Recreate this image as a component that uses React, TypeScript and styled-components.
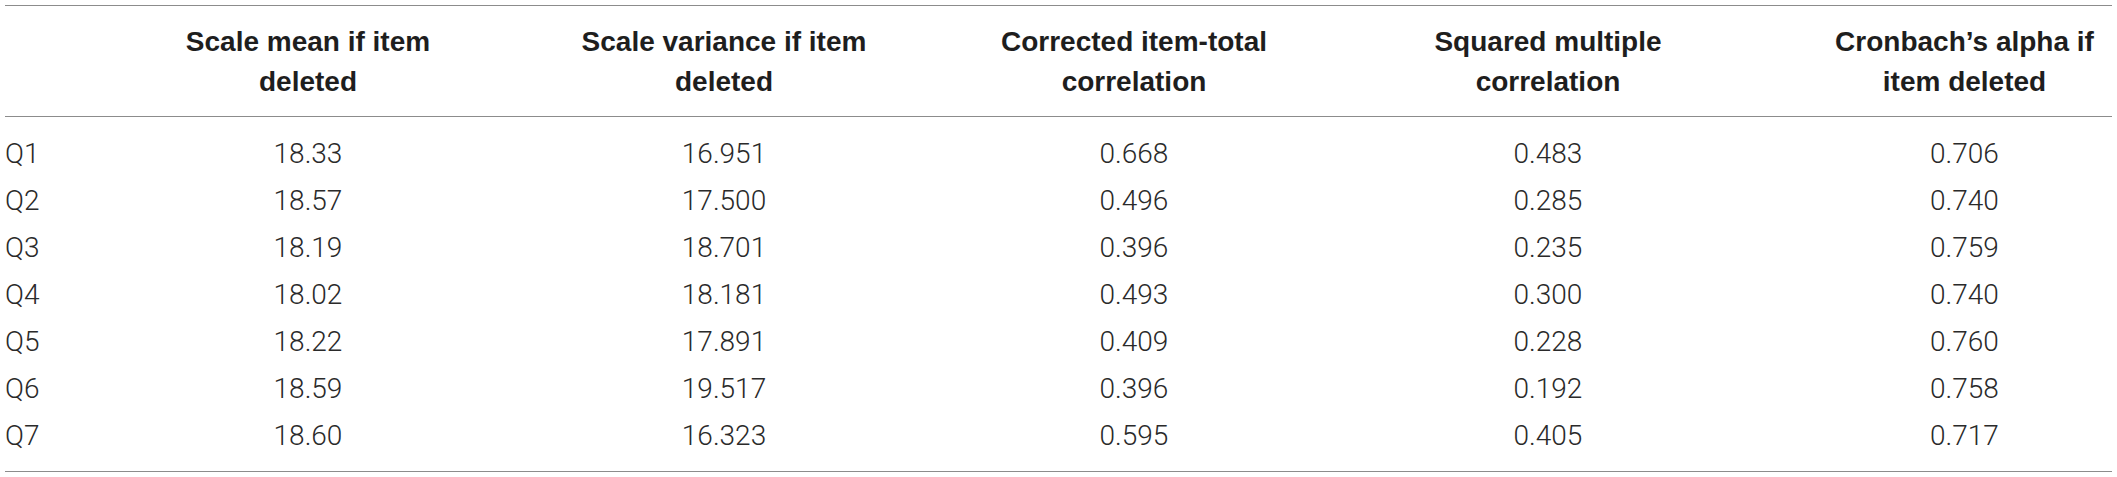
import React from "react";
import styled, { createGlobalStyle } from "styled-components";

const Global = createGlobalStyle`
  html, body { margin: 0; padding: 0; background: #ffffff; }
  body { font-family: "Liberation Sans", Arial, sans-serif; }
`;

const COLS = "96px 414px 418px 402px 426px 1fr";

const Table = styled.div`
  margin: 5px 0 0 5px;
  width: 2107px;
  border-top: 1px solid #8c8c8c;
  border-bottom: 1px solid #8c8c8c;
`;

const Head = styled.div`
  display: grid;
  grid-template-columns: ${COLS};
  padding: 16px 0 14px;
  border-bottom: 1px solid #8c8c8c;
`;

const Body = styled.div`
  padding: 13px 0 12px;
`;

const Row = styled.div`
  display: grid;
  grid-template-columns: ${COLS};
  height: 47px;
`;

const HeadCell = styled.div<{ $shift?: number }>`
  font-family: "Liberation Sans", Arial, sans-serif;
  font-weight: 700;
  font-size: 28px;
  line-height: 40px;
  color: #1e1e1e;
  text-align: center;
  white-space: nowrap;
  padding-left: ${(p) => p.$shift ?? 0}px;
`;

const Cell = styled.div<{ $left?: boolean; $shift?: number }>`
  font-family: Roboto, "Liberation Sans", Arial, sans-serif;
  font-weight: 300;
  font-size: 28px;
  line-height: 47px;
  color: #2a2a2a;
  text-align: ${(p) => (p.$left ? "left" : "center")};
  white-space: nowrap;
  padding-left: ${(p) => p.$shift ?? 0}px;
`;

const headers: [string, string][] = [
  ["Scale mean if item", "deleted"],
  ["Scale variance if item", "deleted"],
  ["Corrected item-total", "correlation"],
  ["Squared multiple", "correlation"],
  ["Cronbach\u2019s alpha if", "item deleted"],
];

const rows: string[][] = [
  ["Q1", "18.33", "16.951", "0.668", "0.483", "0.706"],
  ["Q2", "18.57", "17.500", "0.496", "0.285", "0.740"],
  ["Q3", "18.19", "18.701", "0.396", "0.235", "0.759"],
  ["Q4", "18.02", "18.181", "0.493", "0.300", "0.740"],
  ["Q5", "18.22", "17.891", "0.409", "0.228", "0.760"],
  ["Q6", "18.59", "19.517", "0.396", "0.192", "0.758"],
  ["Q7", "18.60", "16.323", "0.595", "0.405", "0.717"],
];

export default function App() {
  return (
    <>
      <Global />
      <Table>
        <Head>
          <HeadCell />
          {headers.map(([a, b], i) => (
            <HeadCell key={i} $shift={i === 4 ? 56 : 0}>
              {a}
              <br />
              {b}
            </HeadCell>
          ))}
        </Head>
        <Body>
          {rows.map((r) => (
            <Row key={r[0]}>
              {r.map((v, i) => (
                <Cell key={i} $left={i === 0} $shift={i === 5 ? 56 : 0}>
                  {v}
                </Cell>
              ))}
            </Row>
          ))}
        </Body>
      </Table>
    </>
  );
}
